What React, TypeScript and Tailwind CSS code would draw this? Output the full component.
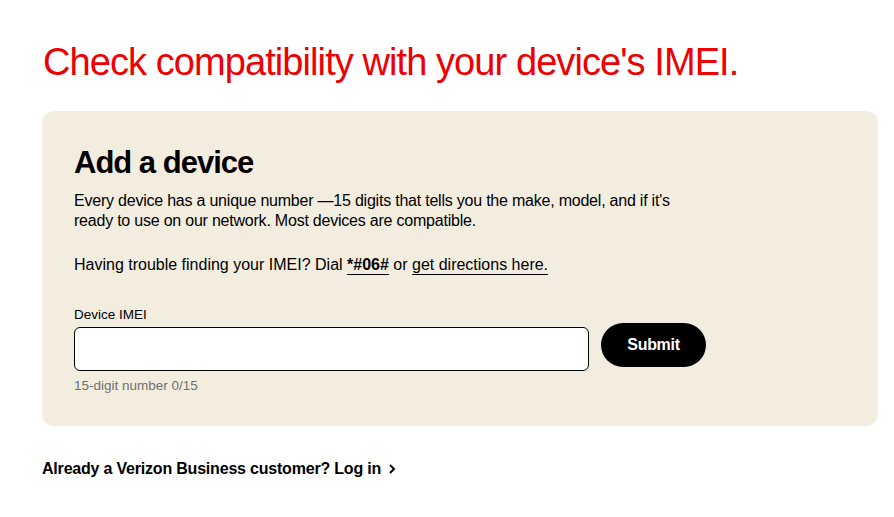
import React from "react";

export default function App() {
  return (
    <div className="w-[894px] h-[517px] bg-white overflow-hidden" style={{ fontFamily: "'Liberation Sans', Arial, sans-serif" }}>
      <div className="pl-[42px] pr-[16px]">
        <h1 className="pt-[40px] text-[38px] leading-[44px] text-[#ee0000] tracking-[-0.92px] font-normal pl-[1px]">
          Check compatibility with your device's IMEI.
        </h1>
        <div className="mt-[27px] w-[836px] h-[315px] bg-[#f3ede0] rounded-[12px] pl-[32px] pt-[34px]">
          <h2 className="text-[31px] leading-[36px] font-bold text-black tracking-[-1px]">Add a device</h2>
          <p className="mt-[10px] text-[16px] leading-[20px] text-black tracking-[-0.22px]">
            Every device has a unique number —15 digits that tells you the make, model, and if it's
            <br />
            ready to use on our network. Most devices are compatible.
          </p>
          <p className="mt-[24px] text-[16px] leading-[20px] text-black">
            Having trouble finding your IMEI? Dial{" "}
            <span className="font-bold border-b border-black pb-[1px]">*#06#</span> or{" "}
            <span className="border-b border-black pb-[1px]">get directions here.</span>
          </p>
          <div className="mt-[32px] text-[13.5px] leading-[16px] text-black">Device IMEI</div>
          <div className="mt-[4px] flex items-start gap-[12px]">
            <div>
              <input className="w-[515px] h-[44px] bg-white border border-black rounded-[6px] outline-none px-3" />
              <div className="mt-[7px] text-[13.5px] leading-[16px] text-[#6f6f6f]">15-digit number 0/15</div>
            </div>
            <button className="-mt-[4px] w-[105px] h-[44px] rounded-full bg-black text-white font-bold text-[16px] tracking-[-0.3px]">
              Submit
            </button>
          </div>
        </div>
        <div className="mt-[33px] flex items-center gap-[6px] text-[16px] leading-[20px] font-bold text-black tracking-[-0.2px]">
          <span>Already a Verizon Business customer? Log in</span>
          <svg width="10" height="12" viewBox="0 0 10 12" fill="none">
            <path d="M3 2 L7 6 L3 10" stroke="black" strokeWidth="2" />
          </svg>
        </div>
      </div>
    </div>
  );
}
